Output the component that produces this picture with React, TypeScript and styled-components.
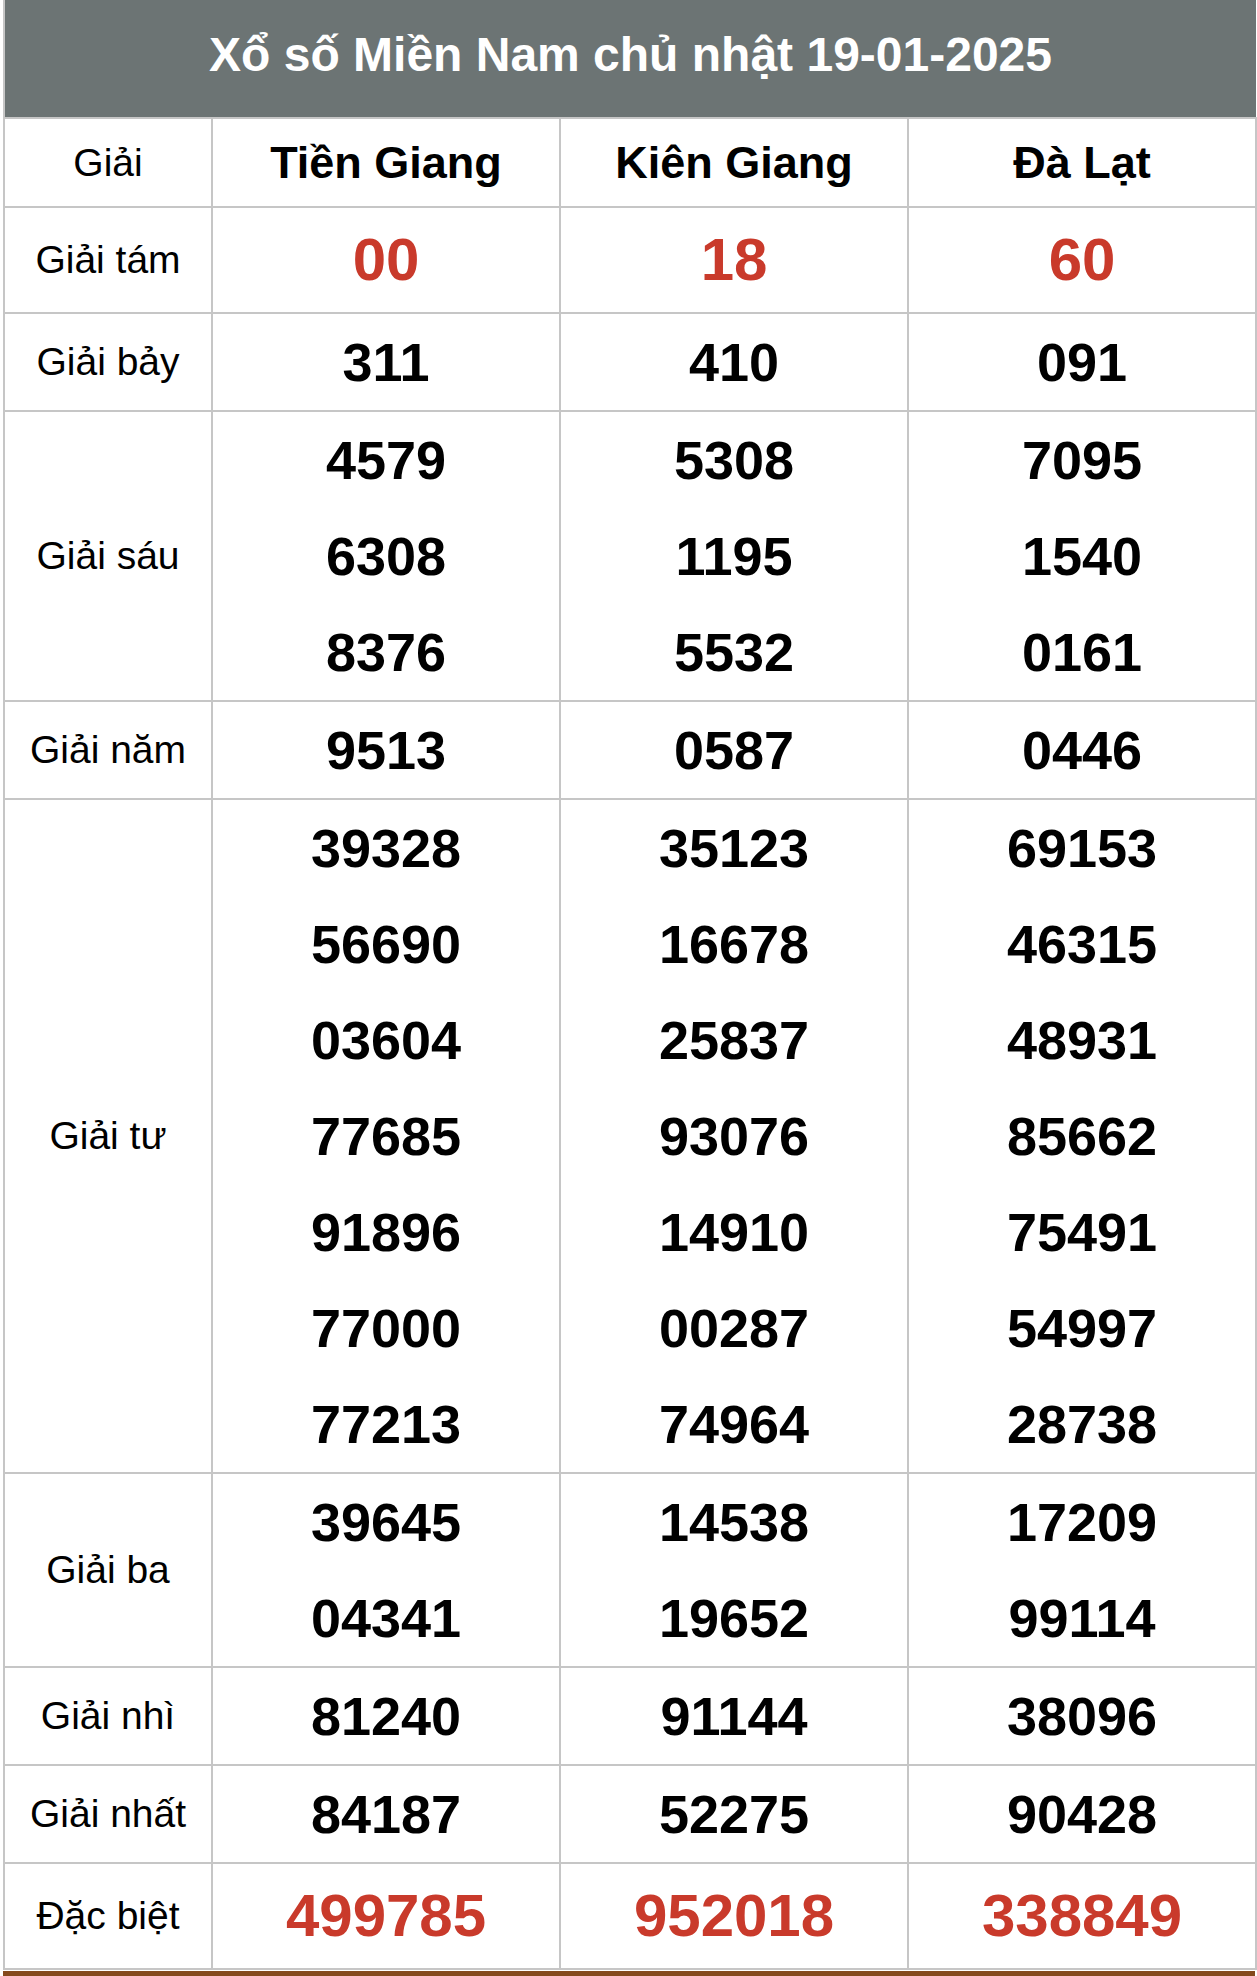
import React from "react";
import styled, { createGlobalStyle } from "styled-components";

const GlobalStyle = createGlobalStyle`
  html, body {
    margin: 0;
    padding: 0;
    background: #ffffff;
  }
  body {
    font-family: "Liberation Sans", Arial, sans-serif;
    color: #000000;
  }
`;

const Page = styled.div`
  padding-left: 3px;
  width: 1254px;
`;

const Board = styled.section`
  width: 1252px;
  display: flex;
  flex-direction: column;
`;

const Title = styled.h1`
  margin: 0;
  width: 1253px;
  box-sizing: border-box;
  height: 117px;
  padding-top: 27px;
  border-left: 2px solid #c6c6c6;
  background: #6c7474;
  color: #ffffff;
  font-size: 48px;
  line-height: 55px;
  font-weight: 700;
  text-align: center;
`;

const Table = styled.table`
  width: 1252px;
  table-layout: fixed;
  border-collapse: collapse;
  border: 2px solid #c6c6c6;
`;

const Col = styled.col<{ $w: number }>`
  width: ${(p) => p.$w}px;
`;

const HeadCell = styled.th<{ $province?: boolean }>`
  border: 2px solid #c6c6c6;
  padding: 0;
  height: 87px;
  line-height: 87px;
  text-align: center;
  vertical-align: middle;
  font-size: ${(p) => (p.$province ? "45px" : "39px")};
  font-weight: ${(p) => (p.$province ? 700 : 400)};
`;

const LabelCell = styled.td`
  border: 2px solid #c6c6c6;
  padding: 0;
  text-align: center;
  vertical-align: middle;
  font-size: 39px;
  font-weight: 400;
`;

const ValueCell = styled.td`
  border: 2px solid #c6c6c6;
  padding: 0;
  text-align: center;
  vertical-align: middle;
`;

const NumberLine = styled.div<{ $red?: boolean; $tall?: boolean }>`
  height: ${(p) => (p.$tall ? "104px" : "96px")};
  line-height: ${(p) => (p.$tall ? "104px" : "96px")};
  font-size: ${(p) => (p.$red ? "60px" : "54px")};
  font-weight: 700;
  color: ${(p) => (p.$red ? "#c93a2b" : "#000000")};
`;

const FooterBar = styled.div`
  width: 1252px;
  height: 5px;
  margin-top: 1px;
  background: #85491c;
`;

type Prize = {
  label: string;
  red?: boolean;
  values: string[][];
};

const provinces = ["Tiền Giang", "Kiên Giang", "Đà Lạt"];

const prizes: Prize[] = [
  { label: "Giải tám", red: true, values: [["00"], ["18"], ["60"]] },
  { label: "Giải bảy", values: [["311"], ["410"], ["091"]] },
  {
    label: "Giải sáu",
    values: [
      ["4579", "6308", "8376"],
      ["5308", "1195", "5532"],
      ["7095", "1540", "0161"],
    ],
  },
  { label: "Giải năm", values: [["9513"], ["0587"], ["0446"]] },
  {
    label: "Giải tư",
    values: [
      ["39328", "56690", "03604", "77685", "91896", "77000", "77213"],
      ["35123", "16678", "25837", "93076", "14910", "00287", "74964"],
      ["69153", "46315", "48931", "85662", "75491", "54997", "28738"],
    ],
  },
  {
    label: "Giải ba",
    values: [
      ["39645", "04341"],
      ["14538", "19652"],
      ["17209", "99114"],
    ],
  },
  { label: "Giải nhì", values: [["81240"], ["91144"], ["38096"]] },
  { label: "Giải nhất", values: [["84187"], ["52275"], ["90428"]] },
  { label: "Đặc biệt", red: true, values: [["499785"], ["952018"], ["338849"]] },
];

export default function App() {
  return (
    <Page>
      <GlobalStyle />
      <Board>
        <Title>Xổ số Miền Nam chủ nhật 19-01-2025</Title>
        <Table>
          <colgroup>
            <Col $w={208} />
            <Col $w={348} />
            <Col $w={348} />
            <Col $w={348} />
          </colgroup>
          <thead>
            <tr>
              <HeadCell>Giải</HeadCell>
              {provinces.map((p) => (
                <HeadCell key={p} $province>
                  {p}
                </HeadCell>
              ))}
            </tr>
          </thead>
          <tbody>
            {prizes.map((prize) => (
              <tr key={prize.label}>
                <LabelCell>{prize.label}</LabelCell>
                {prize.values.map((nums, i) => (
                  <ValueCell key={i}>
                    {nums.map((n, j) => (
                      <NumberLine key={j} $red={prize.red} $tall={prize.red}>
                        {n}
                      </NumberLine>
                    ))}
                  </ValueCell>
                ))}
              </tr>
            ))}
          </tbody>
        </Table>
        <FooterBar />
      </Board>
    </Page>
  );
}
